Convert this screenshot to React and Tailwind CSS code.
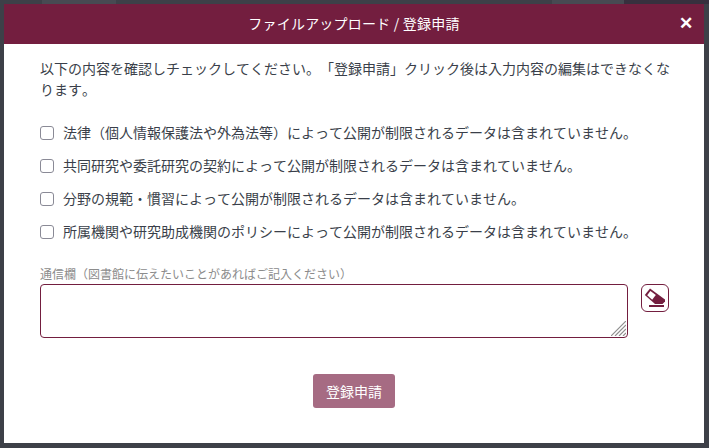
const items = [
    "法律（個人情報保護法や外為法等）によって公開が制限されるデータは含まれていません。",
    "共同研究や委託研究の契約によって公開が制限されるデータは含まれていません。",
    "分野の規範・慣習によって公開が制限されるデータは含まれていません。",
    "所属機関や研究助成機関のポリシーによって公開が制限されるデータは含まれていません。",
]

const EraserIcon = () => (
    <svg width="22" height="20" viewBox="0 0 22 20" aria-hidden="true">
        <path d="M6 0.5 L21 11.5 L21 13.5 L18.5 16 L11 16 L0.8 7 Z" fill="#731e3f" />
        <path d="M6.4 3 L11.8 7 L8.2 11.8 L3.2 7.2 Z" fill="#fff" />
        <rect x="5" y="17" width="15" height="2" fill="#731e3f" />
    </svg>
)

const ResizeGrip = () => (
    <svg className="pointer-events-none absolute bottom-[2px] right-[2px]" width="15" height="15" viewBox="0 0 15 15" aria-hidden="true">
        <path d="M0 15 L15 0 M4 15 L15 4 M8 15 L15 8 M12 15 L15 12" stroke="#8f8f8f" strokeWidth="1.2" fill="none" />
    </svg>
)

const App = () => {
    return (
        <div className="h-[448px] w-[709px] bg-[#3d4048] font-['Noto_Sans_CJK_JP','Noto_Sans_CJK_SC',sans-serif] text-[14px] text-[#3a3f4a] [text-spacing-trim:space-all] [font-kerning:none]">
            <div className="flex h-[4px]">
                <div className="w-[42px]" />
                <div className="w-[74px] bg-[#474a52]" />
                <div className="w-[436px]" />
                <div className="w-[72px] bg-[#474a52]" />
                <div className="flex-1 bg-[#37303e]" />
            </div>
            <div className="ml-[4px] flex h-[439px] w-[700px] flex-col bg-white">
                <div className="flex h-[40px] shrink-0 items-center justify-center bg-[#731e3f] relative">
                    <h1 className="-mt-[2px] text-[14px] tracking-[0.22px] text-white">ファイルアップロード / 登録申請</h1>
                    <button className="absolute right-[11px] top-[8px] text-[17px] font-bold leading-[20px] text-white">✕</button>
                </div>
                <div className="flex flex-1 flex-col pl-[36px] pr-[34px] pt-[14px]">
                    <p className="leading-[21px]">以下の内容を確認しチェックしてください。「登録申請」クリック後は入力内容の編集はできなくなります。</p>
                    <ul className="mt-[22px] flex flex-col gap-[12px]">
                        {items.map((item) => (
                            <li key={item} className="flex h-[21px] items-center">
                                <input type="checkbox" className="h-[14px] w-[14px] shrink-0 appearance-none rounded-[3px] border border-[#8a8a96] bg-white" />
                                <span className="ml-[9px] whitespace-nowrap">{item}</span>
                            </li>
                        ))}
                    </ul>
                    <label className="mt-[23px] block text-[12px] leading-[18px] text-[#8c8c8c]">通信欄（図書館に伝えたいことがあればご記入ください）</label>
                    <div className="mt-px flex items-start">
                        <div className="relative h-[54px] w-[588px]">
                            <textarea className="block h-full w-full resize-none rounded-[4px] border border-[#731e3f] bg-white" />
                            <ResizeGrip />
                        </div>
                        <button className="ml-[13px] flex h-[28px] w-[28px] items-center justify-center rounded-[6px] border border-[#731e3f] bg-white">
                            <EraserIcon />
                        </button>
                    </div>
                    <div className="mt-[36px] flex justify-center pr-[2px]">
                        <button className="h-[34px] w-[82px] rounded-[3px] bg-[#a66b83] text-[14px] text-white">登録申請</button>
                    </div>
                </div>
            </div>
        </div>
    )
}

export default App
